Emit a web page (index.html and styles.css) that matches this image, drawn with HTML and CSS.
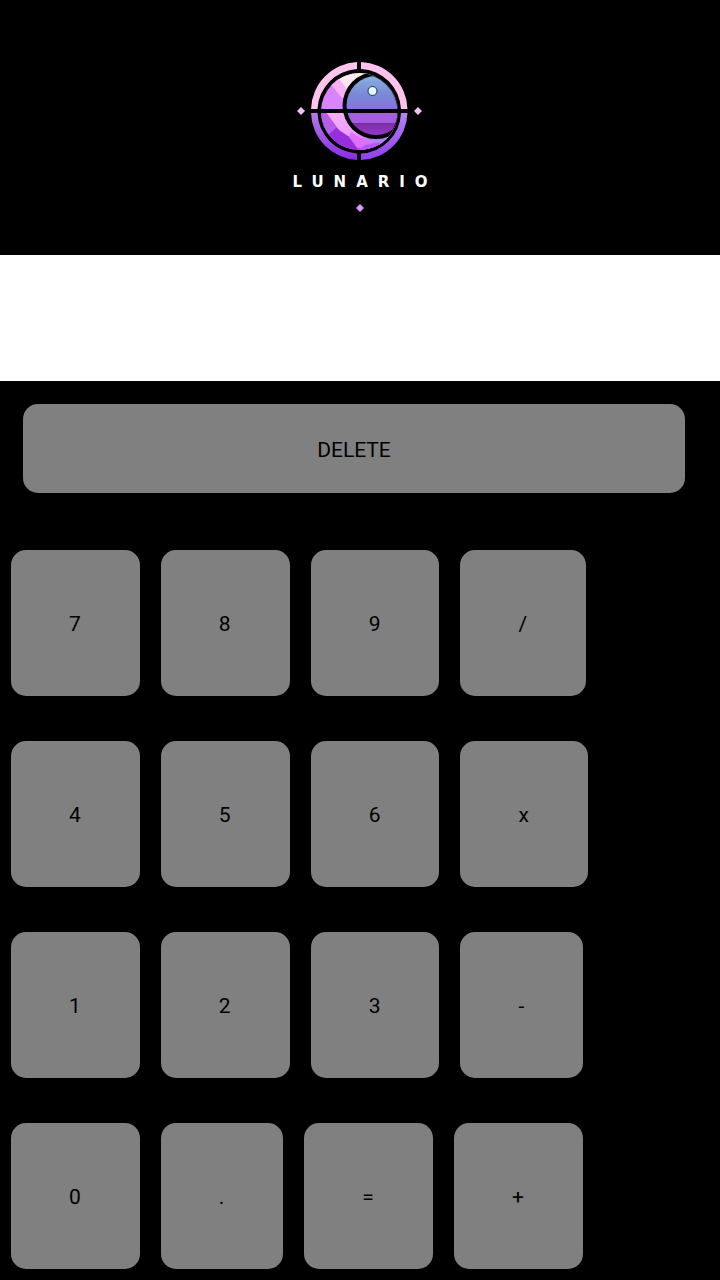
FILE: index.html
```html
<!DOCTYPE html>
<html lang="en">
<head>
<meta charset="utf-8">
<meta name="viewport" content="width=device-width, initial-scale=1">
<title>Lunario</title>
<link rel="stylesheet" href="styles.css">
</head>
<body>
<header class="brand">
  <svg class="emblem" viewBox="0 0 150 120" aria-hidden="true">
    <defs>
      <linearGradient id="ringLow" x1="0" y1="0" x2="0" y2="1"><stop offset="0" stop-color="#b57bea"/><stop offset="1" stop-color="#8a2be6"/></linearGradient>
      <linearGradient id="ringLowRight" x1="0" y1="0" x2="0" y2="1"><stop offset="0" stop-color="#b484f4"/><stop offset="1" stop-color="#9040ee"/></linearGradient>
      <linearGradient id="sky" x1="0" y1="0" x2="0" y2="1"><stop offset="0" stop-color="#88b4e4"/><stop offset=".6" stop-color="#7a86d6"/><stop offset="1" stop-color="#8a70dc"/></linearGradient>
      <linearGradient id="cream" x1="0" y1="0" x2="0" y2="1"><stop offset="0" stop-color="#fff2ec"/><stop offset="1" stop-color="#fbd0f0"/></linearGradient>
      <linearGradient id="band" x1="0" y1="0" x2="1" y2="1"><stop offset="0" stop-color="#f6b2fa"/><stop offset=".45" stop-color="#ee9cfc"/><stop offset="1" stop-color="#bc42fa"/></linearGradient>
      <linearGradient id="deep" x1="0" y1="0" x2="0" y2="1"><stop offset="0" stop-color="#7c2ba4"/><stop offset="1" stop-color="#963cd0"/></linearGradient>
      <clipPath id="moon"><circle cx="74.5" cy="61.5" r="38.5"/></clipPath>
      <clipPath id="planet"><circle cx="91" cy="55.5" r="29.5"/></clipPath>
      <clipPath id="face"><circle cx="74.5" cy="61.5" r="38"/></clipPath>
    </defs>
    <path d="M26 59A48.500 48.500 0 0 1 72 12V19A42 42 0 0 0 32.500 59Z" fill="#ffc4ee"/>
    <path d="M76 12A48.500 48.500 0 0 1 122.500 59H116A42 42 0 0 0 76 19Z" fill="#ffc0ee"/>
    <path d="M26 63A48.500 48.500 0 0 0 72 110V103.500A42 42 0 0 1 32.500 63Z" fill="url(#ringLow)"/>
    <path d="M122.500 63A48.500 48.500 0 0 1 76 110V103.500A42 42 0 0 0 116 63Z" fill="url(#ringLowRight)"/>
    <g clip-path="url(#moon)">
      <path d="M35 22H115V101H35Z" fill="#d884fc"/>
      <path d="M50 20H90V35L62 50L52 29Z" fill="url(#cream)"/>
      <path d="M42 30L52 26L64 42V56Z" fill="#f8b2f4"/>
      <path d="M35 62H45L70 101H35Z" fill="#b75ce8"/>
      <path d="M35 92L51 78L64 82L78 101H35Z" fill="#982fdc"/>
      <path d="M41 62H62L66 76L76 86L105 80L113 74V101H78L66 88L54 80Z" fill="url(#band)"/>
      <path d="M66 82L74 87L86 92L73 99L64 87Z" fill="#dc70fc"/>
      <path d="M80 88L115 74L100 96L90 94Z" fill="#b382fa"/>
      <path d="M90 93H104L96 101H72L80 95Z" fill="#b557fa"/>
      <circle cx="91" cy="55.500" r="33.500" fill="#000"/>
    </g>
    <g clip-path="url(#face)">
      <g clip-path="url(#planet)">
        <path d="M60 25H115V60H60Z" fill="url(#sky)"/>
        <path d="M60 62H115V73H60Z" fill="#a35edc"/>
        <path d="M60 73H115V87H60Z" fill="url(#deep)"/>
      </g>
    </g>
    <path d="M26 59H123V63H26Z" fill="#000"/>
    <circle cx="87.500" cy="41" r="4.500" fill="#e8fcff" stroke="#16304a"/>
    <path d="M16 57L20 61L16 65L12 61ZM133 57L137 61L133 65L129 61Z" fill="#f0c0f4"/>
  </svg>
  <h1 class="wordmark">LUNARIO</h1>
  <svg class="spark" viewBox="0 0 10 10" aria-hidden="true"><path d="M5 1L9 5L5 9L1 5Z" fill="#dc96ff"/></svg>
</header>
<main class="calculator">
  <input class="display" type="text" aria-label="Calculation" readonly>
  <button class="key delete" type="button">DELETE</button>
  <div class="keypad">
    <div class="row">
      <button class="key" type="button">7</button>
      <button class="key" type="button">8</button>
      <button class="key" type="button">9</button>
      <button class="key" type="button">/</button>
    </div>
    <div class="row">
      <button class="key" type="button">4</button>
      <button class="key" type="button">5</button>
      <button class="key" type="button">6</button>
      <button class="key" type="button">x</button>
    </div>
    <div class="row">
      <button class="key" type="button">1</button>
      <button class="key" type="button">2</button>
      <button class="key" type="button">3</button>
      <button class="key" type="button">-</button>
    </div>
    <div class="row">
      <button class="key" type="button">0</button>
      <button class="key" type="button">.</button>
      <button class="key" type="button">=</button>
      <button class="key" type="button">+</button>
    </div>
  </div>
</main>
</body>
</html>
```
FILE: styles.css
```css
* {
  box-sizing: border-box;
}

body {
  margin: 0;
  background: #000;
  font-family: Roboto, "Liberation Sans", sans-serif;
}

.brand {
  display: flex;
  flex-direction: column;
  align-items: center;
  padding: 50px 0 42px;
}

.emblem {
  width: 150px;
  height: 120px;
}

.wordmark {
  margin: 0;
  padding-left: 10px;
  color: #fff;
  font-family: "DejaVu Sans", sans-serif;
  font-size: 15px;
  font-weight: 700;
  line-height: 24px;
  letter-spacing: 10px;
}

.spark {
  width: 10px;
  height: 10px;
  margin-top: 9px;
}

.calculator {
  display: flex;
  flex-direction: column;
}

.display {
  height: 126px;
  padding: 0 24px;
  border: 0;
  border-radius: 0;
  outline: 0;
  background: #fff;
  color: #000;
  font: inherit;
  font-size: 42px;
}

.key {
  padding: 62px 59px 59px 58px;
  border: 0;
  border-radius: 15px;
  background: #808080;
  color: #000;
  font: inherit;
  font-size: 21px;
  line-height: 25px;
}

.delete {
  margin: 23px 35px 0 23px;
  padding: 34px 0 30px;
}

.keypad {
  display: grid;
  gap: 45px;
  padding: 57px 11px 11px;
}

.row {
  display: flex;
  gap: 21px;
}
```
